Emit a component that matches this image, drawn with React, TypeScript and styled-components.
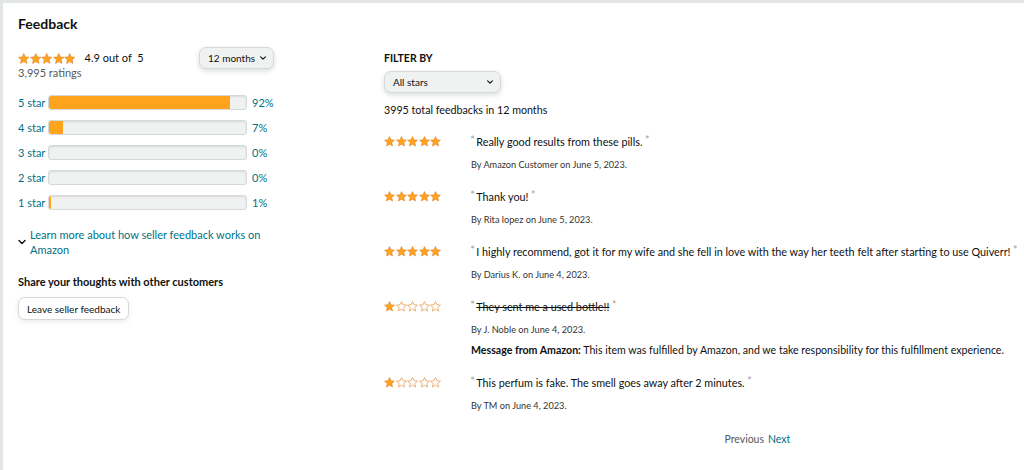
import React from 'react';
import styled, { createGlobalStyle } from 'styled-components';

const GlobalStyle = createGlobalStyle`
  html, body {
    margin: 0;
    padding: 0;
    background: #e3e6e6;
  }
  body {
    font-family: Lato, "Liberation Sans", Arial, sans-serif;
    color: #0f1111;
  }
  * { box-sizing: border-box; }
`;

const Page = styled.div`
  height: 470px;
  padding: 3px 0 0 3px;
  background: #e3e6e6;
`;

const Panel = styled.main`
  height: 100%;
  background: #fff;
  padding: 13px 15px 0 15px;
`;

const Title = styled.h2`
  margin: 0;
  font-size: 14px;
  line-height: 16px;
  font-weight: 700;
`;

const Columns = styled.div`
  display: grid;
  grid-template-columns: 366px 1fr;
  margin-top: 19px;
`;

const LeftCol = styled.section`
  display: flex;
  flex-direction: column;
`;

const Summary = styled.div`
  display: flex;
  justify-content: space-between;
  align-items: flex-start;
  width: 256px;
`;

const SummaryText = styled.div`
  display: flex;
  flex-direction: column;
  gap: 1px;
`;

const StarLine = styled.div`
  display: flex;
  align-items: center;
  gap: 9px;
  font-size: 11px;
  line-height: 14px;
`;

const Muted = styled.span`
  font-size: 11px;
  line-height: 14px;
  color: #565959;
`;

const Dropdown = styled.button<{ $width: number }>`
  display: flex;
  align-items: center;
  justify-content: space-between;
  width: ${p => p.$width}px;
  height: 22px;
  padding: 0 6px 0 8px;
  margin: 0;
  border: 1px solid #d5d9d9;
  border-radius: 7px;
  background: #f0f2f2;
  box-shadow: 0 2px 5px rgba(15, 17, 17, 0.15);
  font-family: inherit;
  font-size: 10px;
  white-space: nowrap;
  color: #0f1111;
`;

const Bars = styled.div`
  display: flex;
  flex-direction: column;
  margin-top: 10px;
`;

const BarRow = styled.div`
  display: grid;
  grid-template-columns: 30px 199px auto;
  align-items: center;
  height: 25px;
  font-size: 11px;
  color: #007185;
`;

const Pct = styled.span`
  padding-left: 5px;
`;

const Track = styled.div`
  height: 15px;
  border: 1px solid #d5d9d9;
  border-radius: 3px;
  background: #f0f2f2;
  overflow: hidden;
  box-shadow: inset 0 1px 2px rgba(15, 17, 17, 0.1);
`;

const Fill = styled.div`
  height: 100%;
  background: #ffa41c;
  border-radius: 2px 0 0 2px;
`;

const LearnMore = styled.a`
  display: flex;
  align-items: center;
  gap: 3px;
  margin-top: 12px;
  width: 250px;
  color: #007185;
  font-size: 11px;
  line-height: 15px;
  text-decoration: none;
`;

const Chevron = styled.span`
  flex: none;
  display: flex;
  align-self: center;
  margin-left: -1px;
`;

const ShareTitle = styled.h3`
  margin: 18px 0 0;
  font-size: 11px;
  line-height: 14px;
  font-weight: 700;
`;

const Button = styled.button`
  align-self: flex-start;
  margin-top: 8px;
  height: 23px;
  padding: 0 8px;
  border: 1px solid #d5d9d9;
  border-radius: 7px;
  background: #fff;
  box-shadow: 0 2px 5px rgba(213, 217, 217, 0.5);
  font-family: inherit;
  font-size: 10px;
  color: #0f1111;
`;

const RightCol = styled.section`
  display: flex;
  flex-direction: column;
`;

const FilterLabel = styled.div`
  font-size: 10.5px;
  line-height: 14px;
  font-weight: 700;
  text-transform: uppercase;
`;

const FilterSpacer = styled.div`
  margin-top: 6px;
`;

const TotalLine = styled.div`
  margin-top: 10px;
  font-size: 10.7px;
  line-height: 14px;
`;

const ReviewList = styled.div`
  display: flex;
  flex-direction: column;
  margin-top: 18px;
  gap: 19px;
`;

const Review = styled.article`
  display: grid;
  grid-template-columns: 87px 1fr;
  align-items: start;
`;

const ReviewBody = styled.div`
  display: flex;
  flex-direction: column;
`;

const Quote = styled.div<{ $struck?: boolean }>`
  font-size: 10.8px;
  line-height: 14px;
  white-space: nowrap;
  text-decoration: ${p => (p.$struck ? 'line-through' : 'none')};
`;

const QuoteMark = styled.span`
  font-size: 9px;
  vertical-align: top;
  line-height: 10px;
  color: #767676;
  padding: 0 2px 0 0;
  text-decoration: none;
  display: inline-block;
`;

const ByLine = styled.div`
  margin-top: 10px;
  font-size: 9.2px;
  line-height: 12px;
  color: #333;
`;

const Message = styled.div`
  margin-top: 7px;
  font-size: 10.6px;
  line-height: 14px;
  white-space: nowrap;
  b { font-weight: 700; }
`;

const Pager = styled.nav`
  display: flex;
  justify-content: center;
  gap: 4px;
  margin-top: 21px;
  padding-left: 112px;
  font-size: 10.5px;
`;

const PagerItem = styled.span<{ $active?: boolean }>`
  color: ${p => (p.$active ? '#007185' : '#565959')};
`;

const StarWrap = styled.span<{ $gap: number }>`
  display: inline-flex;
  gap: ${p => p.$gap}px;
  padding-top: 1px;
`;

const STAR = 'M6 0.6 L7.6 4.1 L11.4 4.5 L8.5 7.1 L9.3 10.9 L6 8.9 L2.7 10.9 L3.5 7.1 L0.6 4.5 L4.4 4.1 Z';

const Stars: React.FC<{ count: number; size?: number; gap?: number }> = ({ count, size = 11, gap = 0.5 }) => (
  <StarWrap $gap={gap}>
    {Array.from({ length: 5 }, (_, i) => (
      <svg key={i} width={size} height={size} viewBox="0 0 12 12">
        <path
          d={STAR}
          fill={i < count ? '#ffa41c' : '#fff'}
          stroke={i < count ? '#de7921' : '#e08a2c'}
          strokeWidth={i < count ? 0.6 : 0.7}
          strokeLinejoin="round"
        />
      </svg>
    ))}
  </StarWrap>
);

const ChevronDown: React.FC<{ size?: number }> = ({ size = 8 }) => (
  <svg width={size} height={size} viewBox="0 0 10 10">
    <path d="M2 3.5 L5 6.5 L8 3.5" fill="none" stroke="#0f1111" strokeWidth="1.4" strokeLinecap="round" strokeLinejoin="round" />
  </svg>
);

const bars = [
  { label: '5 star', pct: 92 },
  { label: '4 star', pct: 7 },
  { label: '3 star', pct: 0 },
  { label: '2 star', pct: 0 },
  { label: '1 star', pct: 1 },
];

const reviews = [
  { stars: 5, text: 'Really good results from these pills.', by: 'By Amazon Customer on June 5, 2023.' },
  { stars: 5, text: 'Thank you!', by: 'By Rita lopez on June 5, 2023.' },
  {
    stars: 5,
    text: 'I highly recommend, got it for my wife and she fell in love with the way her teeth felt after starting to use Quiverr!',
    by: 'By Darius K. on June 4, 2023.',
  },
  {
    stars: 1,
    text: 'They sent me a used bottle!!',
    by: 'By J. Noble on June 4, 2023.',
    struck: true,
    message: 'This item was fulfilled by Amazon, and we take responsibility for this fulfillment experience.',
  },
  { stars: 1, text: 'This perfum is fake. The smell goes away after 2 minutes.', by: 'By TM on June 4, 2023.' },
];

export default function App() {
  return (
    <>
      <GlobalStyle />
      <Page>
        <Panel>
          <Title>Feedback</Title>
          <Columns>
            <LeftCol>
              <Summary>
                <SummaryText>
                  <StarLine>
                    <Stars count={5} size={11.5} gap={0} />
                    <span>4.9 out of&nbsp; 5</span>
                  </StarLine>
                  <Muted>3,995 ratings</Muted>
                </SummaryText>
                <Dropdown $width={75} style={{ marginTop: '-4px' }}>
                  <span>12 months</span>
                  <ChevronDown />
                </Dropdown>
              </Summary>

              <Bars>
                {bars.map(b => (
                  <BarRow key={b.label}>
                    <span>{b.label}</span>
                    <Track>
                      <Fill style={{ width: `${b.pct}%` }} />
                    </Track>
                    <Pct>{b.pct}%</Pct>
                  </BarRow>
                ))}
              </Bars>

              <LearnMore href="#">
                <Chevron>
                  <ChevronDown size={10} />
                </Chevron>
                <span>Learn more about how seller feedback works on Amazon</span>
              </LearnMore>

              <ShareTitle>Share your thoughts with other customers</ShareTitle>
              <Button>Leave seller feedback</Button>
            </LeftCol>

            <RightCol>
              <FilterLabel>Filter by</FilterLabel>
              <FilterSpacer>
                <Dropdown $width={117}>
                  <span>All stars</span>
                  <ChevronDown />
                </Dropdown>
              </FilterSpacer>
              <TotalLine>3995 total feedbacks in 12 months</TotalLine>

              <ReviewList>
                {reviews.map((r, i) => (
                  <Review key={i}>
                    <Stars count={r.stars} />
                    <ReviewBody>
                      <Quote $struck={r.struck}>
                        <QuoteMark>&ldquo;</QuoteMark>
                        {r.text}
                        <QuoteMark style={{ paddingLeft: '3px' }}>&rdquo;</QuoteMark>
                      </Quote>
                      <ByLine>{r.by}</ByLine>
                      {r.message && (
                        <Message>
                          <b>Message from Amazon:</b> {r.message}
                        </Message>
                      )}
                    </ReviewBody>
                  </Review>
                ))}
              </ReviewList>

              <Pager>
                <PagerItem>Previous</PagerItem>
                <PagerItem $active>Next</PagerItem>
              </Pager>
            </RightCol>
          </Columns>
        </Panel>
      </Page>
    </>
  );
}
